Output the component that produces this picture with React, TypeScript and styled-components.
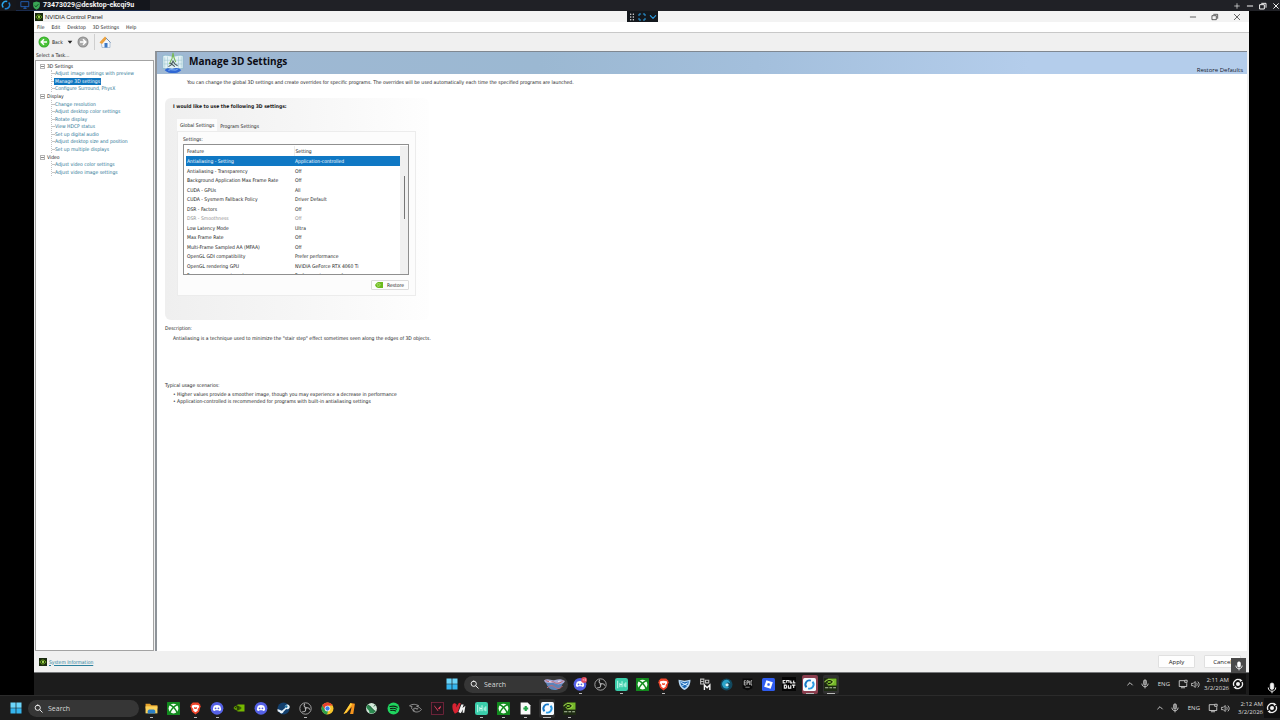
import React from "react";
import styled, { createGlobalStyle, css } from "styled-components";

const GlobalStyle = createGlobalStyle`
  *, *::before, *::after { box-sizing: border-box; }
  body { margin: 0; background: #000; }
  button, input { font: inherit; color: inherit; }
  ul { list-style: none; margin: 0; padding: 0; }
  p, h1, h2 { margin: 0; }
  svg { display: block; flex: none; }
`;

const ui = `"DejaVu Sans Condensed", "Liberation Sans", sans-serif`;
const shell = `"Open Sans", "Noto Sans", sans-serif`;

/* ---------- page ---------- */

const Page = styled.div`
  display: flex;
  flex-direction: column;
  min-height: 100vh;
  background: #000;
  color: #1a1a1a;
  font-family: ${ui};
  font-size: 5px;
  line-height: 8px;
`;

const SessionBar = styled.header`
  display: flex;
  align-items: center;
  height: 11px;
  background: #202126;
  color: #f4f4f4;
`;

const SessionHome = styled.div`
  width: 16px;
  height: 11px;
  padding-left: 1px;
  background: #16171b;
`;

const SessionTab = styled.div`
  display: flex;
  align-items: center;
  gap: 2px;
  width: 134px;
  height: 11px;
  padding-left: 4px;
  background: #14161c;
  border-bottom: 1px solid #1b2b4c;
  font-family: Roboto, sans-serif;
  font-size: 7px;
  font-weight: 700;
  white-space: nowrap;
`;

const SessionActions = styled.div`
  display: flex;
  gap: 5px;
  margin-left: auto;
`;

const BareButton = styled.button`
  display: flex;
  align-items: center;
  justify-content: center;
  padding: 0;
  border: 0;
  background: none;
`;

const Stage = styled.div`
  display: flex;
  flex: 1;
`;

const Gutter = styled.div<{ $width: number }>`
  display: flex;
  align-items: flex-end;
  justify-content: flex-end;
  width: ${(p) => p.$width}px;
  padding: 0 2px 1px 0;
  color: #f2f2f2;
`;

const Desktop = styled.div`
  position: relative;
  display: flex;
  flex: 1;
  flex-direction: column;
  min-width: 0;
`;

const FloatingBar = styled.div`
  position: absolute;
  top: 0;
  left: 593px;
  display: flex;
  align-items: center;
  justify-content: space-around;
  width: 31px;
  height: 11px;
  background: #14181d;
`;

const MicBadge = styled.div`
  position: absolute;
  right: 3px;
  bottom: 22px;
  display: flex;
  align-items: center;
  justify-content: center;
  width: 15px;
  height: 15px;
  background: #4a4a4a;
  color: #fff;
`;

/* ---------- control panel window ---------- */

const AppWindow = styled.div`
  display: flex;
  flex: 1;
  flex-direction: column;
  background: #f0f0f0;
`;

const TitleBar = styled.div`
  display: flex;
  align-items: center;
  gap: 2px;
  height: 11px;
  padding: 0 8px 0 1px;
  background: #f3f3f3;
  font-family: "Liberation Sans", sans-serif;
  font-size: 6px;
`;

const WindowControls = styled.div`
  display: flex;
  gap: 14px;
  margin-left: auto;
`;

const MenuBar = styled.nav`
  display: flex;
  align-items: center;
  gap: 7px;
  height: 10px;
  padding: 0 3px;
  background: #fff;
`;

const MenuItem = styled(BareButton)``;

const ToolBar = styled.div`
  display: flex;
  align-items: center;
  height: 19px;
  padding-left: 4px;
  border-top: 1px solid #c8c8c8;
`;

const ToolButton = styled(BareButton)`
  gap: 2px;
`;

const ToolDivider = styled.span`
  width: 1px;
  height: 16px;
  margin: 0 4px 0 5px;
  background: #cfcfcf;
`;

const Body = styled.div`
  display: flex;
  flex: 1;
`;

const TaskPane = styled.aside`
  display: flex;
  flex-direction: column;
  width: 121px;
  padding: 0 0 0 1px;
`;

const TaskHeading = styled.h2`
  height: 9px;
  padding-left: 1px;
  font-size: 5px;
  font-weight: 400;
  line-height: 8px;
`;

const TaskBox = styled.div`
  flex: 1;
  margin-right: 1px;
  padding: 1px 0 0 4px;
  border: 1px solid #a3a3a3;
  background: #fff;
`;

const Tree = styled.ul`
  display: flex;
  flex-direction: column;
  height: 114px;
`;

const Group = styled.li<{ $rows: number }>`
  display: flex;
  flex: ${(p) => p.$rows} 0 0;
  flex-direction: column;
`;

const GroupName = styled.div`
  display: flex;
  flex: 1 0 0;
  align-items: center;
  gap: 2px;
`;

const Expander = styled.button`
  width: 5px;
  height: 5px;
  padding: 0;
  border: 1px solid #b4b4b4;
  background: linear-gradient(#888, #888) center / 3px 1px no-repeat #fff;
`;

const Leaves = styled.ul<{ $rows: number }>`
  display: flex;
  flex: ${(p) => p.$rows} 0 0;
  flex-direction: column;
  margin-left: 11px;
  border-left: 1px dotted #c4c4c4;
`;

const Leaf = styled.li`
  display: flex;
  flex: 1 0 0;
  align-items: center;

  &::before {
    content: "";
    width: 2px;
    border-top: 1px dotted #c4c4c4;
  }
`;

const TaskLink = styled.a<{ $active?: boolean }>`
  padding: 0 1px;
  color: #2b7594;
  line-height: 7px;
  text-decoration: none;
  white-space: nowrap;
  ${(p) =>
    p.$active &&
    css`
      background: #0f76c0;
      color: #fff;
    `}
`;

const Content = styled.main`
  display: flex;
  flex: 1;
  flex-direction: column;
  min-width: 0;
  margin-right: 2px;
  border-left: 2px solid #8e9399;
  border-top: 1px solid #7f8790;
  background: #fff;
`;

const Banner = styled.div`
  display: flex;
  gap: 5px;
  height: 22px;
  padding: 0 4px 0 5px;
  background: linear-gradient(90deg, #9fb8d3, #9bb8d2 35%, #a3bfdc 55%, #b4cdeb 80%);
`;

const PageTitle = styled.h1`
  color: #0c0c14;
  font-family: "Open Sans", sans-serif;
  font-size: 10px;
  font-weight: 700;
  line-height: 18px;
`;

const RestoreDefaults = styled(BareButton)`
  align-self: flex-end;
  margin-left: auto;
  color: #17202c;
  font-family: ${shell};
  font-size: 6px;
`;

const Intro = styled.p`
  padding: 4px 0 0 30px;
`;

const Card = styled.section`
  width: 264px;
  height: 222px;
  margin: 12px 0 4px 8px;
  padding: 4px 12px 0;
  border-radius: 6px;
  background: linear-gradient(90deg, #efefef, #f6f6f6 50%, #fefefe);
`;

const CardTitle = styled.h2`
  height: 17px;
  margin-left: -4px;
  font-size: 5px;
  font-weight: 700;
  line-height: 8px;
`;

const Tabs = styled.div`
  display: flex;
  align-items: flex-end;
`;

const Tab = styled.button<{ $active?: boolean }>`
  height: ${(p) => (p.$active ? 12 : 10)}px;
  padding: 0 3px;
  border: 0;
  background: ${(p) => (p.$active ? "#fcfcfc" : "transparent")};
  line-height: 8px;
`;

const TabPanel = styled.div`
  width: 239px;
  height: 165px;
  padding: 3px 6px 0 5px;
  border: 1px solid #ececec;
  background: #fcfcfc;
`;

const ListBox = styled.div`
  display: flex;
  height: 131px;
  margin-top: 1px;
  padding: 1px 0 0 2px;
  overflow: hidden;
  border: 1px solid #8f8f8f;
  background: #fff;
`;

const SettingsTable = styled.table`
  flex: 1;
  align-self: flex-start;
  border-collapse: collapse;
  table-layout: fixed;
`;

const Cell = css`
  padding: 0 0 0 1px;
  font-weight: 400;
  text-align: left;
  white-space: nowrap;
  line-height: 8px;
`;

const HeadCell = styled.th`
  ${Cell}
  height: 10px;

  & + & {
    width: 106px;
    border-left: 1px solid #ececec;
  }
`;

const BodyCell = styled.td`
  ${Cell}
`;

const Row = styled.tr<{ $state?: "selected" | "disabled" }>`
  height: 10px;
  &:nth-child(even) { height: 9px; }
  ${(p) => p.$state === "selected" && css`background: #0f78c4; color: #fff;`}
  ${(p) => p.$state === "disabled" && css`color: #8e8e8e;`}
`;

const ScrollTrack = styled.div`
  width: 8px;
  padding: 30px 0 0 4px;
  background: #f0f0f0;
`;

const ScrollThumb = styled.div`
  width: 1px;
  height: 43px;
  background: #767676;
`;

const PanelFooter = styled.div`
  display: flex;
  justify-content: flex-end;
  padding-top: 5px;
`;

const RestoreButton = styled.button`
  display: flex;
  align-items: center;
  gap: 4px;
  width: 38px;
  height: 10px;
  padding: 0 3px;
  border: 1px solid #dcdcdc;
  border-radius: 1px;
  background: #fdfdfd;
`;

const Notes = styled.section`
  min-height: 57px;
  padding-left: 8px;
`;

const NotesTitle = styled.h2`
  padding-bottom: 2px;
  font-size: 5px;
  font-weight: 400;
  line-height: 8px;
`;

const NotesText = styled.p`
  padding-left: 8px;
`;

const Bullets = styled.ul`
  padding-left: 8px;
  line-height: 7px;

  li::before {
    content: "• ";
  }
`;

const BottomBar = styled.footer`
  display: flex;
  align-items: center;
  gap: 9px;
  height: 21px;
  padding: 0 8px 0 5px;
`;

const SystemInfo = styled.a`
  display: flex;
  align-items: center;
  gap: 2px;
  margin-right: auto;
  color: #2b7f9c;
`;

const DialogButton = styled.button`
  width: 37px;
  height: 13px;
  padding: 0;
  border: 1px solid #e0e0e0;
  border-radius: 1px;
  background: #fefefe;
  font-family: ${shell};
  font-size: 6px;
`;

/* ---------- taskbars ---------- */

const TaskBar = styled.div<{ $height: number; $centered?: boolean }>`
  display: flex;
  align-items: center;
  justify-content: ${(p) => (p.$centered ? "center" : "flex-start")};
  position: relative;
  height: ${(p) => p.$height}px;
  padding-left: ${(p) => (p.$centered ? 2 : 10)}px;
  border-top: 1px solid ${(p) => (p.$centered ? "#77797b" : "#2b2b2b")};
  background: #1c1c1c;
  color: #eee;
  font-family: ${shell};
  font-size: 6px;
`;

const SearchPill = styled.label<{ $width: number }>`
  display: flex;
  align-items: center;
  gap: 5px;
  width: ${(p) => p.$width}px;
  height: 17px;
  margin-left: 6px;
  padding: 0 2px 0 6px;
  border-radius: 9px;
  background: #363636;
  font-size: 7px;
`;

const SearchInput = styled.input`
  flex: 1;
  min-width: 0;
  height: 11px;
  padding: 0;
  border: 0;
  background: none;
  outline: none;

  &::placeholder {
    color: #d8d8d8;
    opacity: 1;
  }
`;

const Apps = styled.div<{ $width?: number }>`
  display: flex;
  justify-content: space-between;
  gap: ${(p) => (p.$width ? 0 : 6)}px;
  width: ${(p) => (p.$width ? `${p.$width}px` : "auto")};
  margin-left: 4px;
`;

const AppButton = styled.button<{ $mark?: "running" | "active"; $tint?: string }>`
  position: relative;
  display: flex;
  align-items: center;
  justify-content: center;
  width: 16px;
  height: 19px;
  padding: 0;
  border: 0;
  border-radius: 2px;
  background: ${(p) => p.$tint || "none"};

  ${(p) =>
    p.$mark &&
    css`
      &::after {
        content: "";
        position: absolute;
        bottom: 0;
        width: ${p.$mark === "active" ? 8 : 3}px;
        height: 1px;
        background: #b8b8b8;
      }
    `}
`;

const Tray = styled.div<{ $end: number }>`
  position: absolute;
  right: ${(p) => p.$end}px;
  display: flex;
  align-items: center;
  color: #ddd;
`;

const TrayIcons = styled.div<{ $gap: number }>`
  display: flex;
  align-items: center;
  gap: 3px;
  margin-right: ${(p) => p.$gap}px;
`;

const Lang = styled.span`
  margin: 0 5px;
`;

const Clock = styled.time`
  width: 26px;
  line-height: 8px;
  text-align: right;
  white-space: nowrap;
`;

const TrayEnd = styled.div`
  display: flex;
  align-items: center;
  justify-content: center;
  width: 16px;
  height: 20px;
  margin-left: 1px;
  background: #0f0f0f;
`;

/* ---------- icons ---------- */

type IconProps = { size?: number; children?: React.ReactNode };
const Svg = ({ size = 13, children }: IconProps) => (
  <svg width={size} height={size} viewBox="0 0 24 24" fill="none" aria-hidden="true">
    {children}
  </svg>
);

const Line = ({ d, w = 2, size = 8, color = "currentColor" }: { d: string; w?: number; size?: number; color?: string }) => (
  <Svg size={size}>
    <path d={d} stroke={color} strokeWidth={w} strokeLinecap="round" strokeLinejoin="round" />
  </Svg>
);

const MicIcon = ({ size = 10, filled = false }: { size?: number; filled?: boolean }) => (
  <Svg size={size}>
    <rect x="8.5" y="2" width="7" height="13" rx="3.5" fill={filled ? "currentColor" : "#888"} stroke="currentColor" strokeWidth="1.4" />
    <path d="M4.500 11c0 10 15 10 15 0M12 18.500v4" stroke="currentColor" strokeWidth="2" />
  </Svg>
);

const Windows = () => (
  <Svg size={12}>
    <path d="M1 1h10.300v10.300H1zM12.700 1H23v10.300H12.700z" fill="#6cd5fa" />
    <path d="M1 12.700h10.300V23H1zM12.700 12.700H23V23H12.700z" fill="#35b5ee" />
  </Svg>
);

const Magnifier = () => <Line size={9} w={2.6} d="M10 3a7 7 0 1 0 0 14a7 7 0 0 0 0-14zM15.500 15.500L22 22" />;

const Swirl = () => (
  <Svg>
    <rect width="24" height="24" rx="3" fill="#f6fbff" />
    <path d="M6.500 17A7.400 7.400 0 0 1 14.500 5" stroke="#1678c8" strokeWidth="3.600" />
    <path d="M17.500 7A7.400 7.400 0 0 1 9.500 19" stroke="#2a9be6" strokeWidth="3.600" />
  </Svg>
);

const SessionLogo = () => (
  <Svg size={10}>
    <path d="M5.500 18A9 9 0 0 1 15 3.500" stroke="#2aa4ea" strokeWidth="3.600" />
    <path d="M18.500 6A9 9 0 0 1 9 20.500" stroke="#1f7fd0" strokeWidth="3.600" />
  </Svg>
);

const Monitor = () => <Line size={10} w={2} color="#2467c4" d="M3 4h18v12H3zM9 20h6M12 16v4" />;

const Shield = () => (
  <Svg size={9}>
    <path d="M12 1l9 3v8c0 6-5 9-9 11-4-2-9-5-9-11V4z" fill="#3aa655" />
    <path d="M7.500 12l3 3.500L17 8.500" stroke="#0e3319" strokeWidth="2.200" />
  </Svg>
);

const Folder = () => (
  <Svg>
    <path d="M1 3h8l3 3h11v6H1z" fill="#e6a32c" />
    <path d="M1 8h22v13H1z" fill="#fbd35c" />
    <path d="M5 21v-4c0-2 2-3 4-3h6c2 0 4 1 4 3v4z" fill="#2c7fc5" />
  </Svg>
);

const Xbox = () => (
  <Svg>
    <rect width="24" height="24" rx="1" fill="#128a1e" />
    <circle cx="12" cy="12" r="9" fill="#f4fff4" />
    <path d="M5 5C9 7 16 13 18.500 20M19 5C15 7 8 13 5.500 20" stroke="#128a1e" strokeWidth="2.600" />
  </Svg>
);

const Brave = () => (
  <Svg>
    <path d="M7 1h10l3 3 1.500 4-3 10L12 23l-6.500-5-3-10L4 4z" fill="#f0452a" />
    <path d="M6 6l6-1 6 1 1 3-3 4 0 3-4 3-4-3 0-3-3-4z" fill="#fff" />
    <path d="M9 9l3 1 3-1-1 4h-4z" fill="#f0452a" />
  </Svg>
);

const Discord = ({ badge = false }: { badge?: boolean }) => (
  <Svg size={14}>
    <circle cx="12" cy="12.500" r="11" fill="#5561e6" />
    <path d="M7 8c3-1.600 7-1.600 10 0 1.500 2.500 2.200 5 2 8-1.500 1-2.500 1.300-3.500 1.300L14.500 16h-5l-1 1.300C7.500 17.300 6.500 17 5 16c-.2-3 .5-5.500 2-8z" fill="#fff" />
    <circle cx="9.500" cy="12.500" r="1.500" fill="#5561e6" />
    <circle cx="14.500" cy="12.500" r="1.500" fill="#5561e6" />
    {badge && <circle cx="19" cy="5" r="5" fill="#e2495c" />}
    {badge && <path d="M16.500 5h2.500M20 3.500h2M21 4.500v2.500" stroke="#fff" strokeWidth="1.200" />}
  </Svg>
);

const NvidiaEye = () => (
  <Svg size={12}>
    <path d="M9 5h14v14H9z" fill="#76b900" />
    <path d="M1 12c3-5 8-6 12-4 3 1 4 3 5 4-3 5-7 6-10 5-4-1-6-3-7-5z" fill="#5c9400" />
    <path d="M4 12c2-3 6-4 9-2l2 2c-2 3-5 4-7 3" stroke="#1d2b06" strokeWidth="1.800" />
    <circle cx="10" cy="12" r="2" fill="#1d2b06" />
  </Svg>
);

const Steam = () => (
  <Svg>
    <circle cx="12" cy="12" r="11" fill="#123f6d" />
    <path d="M1 13l8 3 6-5a4.500 4.500 0 1 1 2 2l-5 5c-1 4-6 4-7 1l-4-2z" fill="#e8f3fa" />
    <circle cx="17" cy="8.500" r="2.500" fill="#2174a5" />
  </Svg>
);

const Obs = () => (
  <Svg>
    <circle cx="12" cy="12" r="10.500" fill="#191919" stroke="#b5b5b5" strokeWidth="1.600" />
    <path d="M11 3c-4 4 0 8 3 7M20 14c-2-5-8-4-8 0M6 18c6 1 8-4 5-7" stroke="#b5b5b5" strokeWidth="2" />
  </Svg>
);

const Chrome = () => (
  <Svg>
    <circle cx="12" cy="12" r="11" fill="#f7c52b" />
    <path d="M2.500 6.500A11 11 0 0 1 21.500 6.500H12L7.300 14.700z" fill="#e5402f" />
    <path d="M2.500 6.500L8 15l5 2.500L11 23A11 11 0 0 1 2.500 6.500z" fill="#2da14c" />
    <circle cx="12" cy="12" r="5.200" fill="#fff" />
    <circle cx="12" cy="12" r="4" fill="#3b7de8" />
  </Svg>
);

const Strike = () => (
  <Svg>
    <path d="M1 22L14 2l8 1-3 19h-6l3-13L7 20z" fill="#f7951e" />
    <path d="M1 22L14 2l3 2L6 20z" fill="#ffd23b" />
  </Svg>
);

const GreenGlobe = () => (
  <Svg>
    <circle cx="12" cy="12" r="10" fill="#d3e8da" />
    <path d="M3 7c5-4 8 2 12 6 2 3 5 3 5 4-4 5-9 5-12 3 1-4-3-6-5-9z" fill="#2c8a50" />
    <path d="M3 3l16 15" stroke="#2f5f42" strokeWidth="1.600" />
    <path d="M16 8l4-3" stroke="#2f5f42" strokeWidth="1.600" />
  </Svg>
);

const Spotify = () => (
  <Svg>
    <circle cx="12" cy="12" r="11" fill="#20d45f" />
    <path d="M5.500 8.500c5-1.500 9.500-1 13.500 1M6.500 12.200c4-1 8-.7 11 1M7 15.800c3-.8 6.500-.5 9 .8" stroke="#0d1f13" strokeWidth="2" strokeLinecap="round" />
  </Svg>
);

const Shark = () => (
  <Svg>
    <path d="M1 7c6-4 12-3 17 0l-4 1c4 1 7 3 9 6-4 5-11 6-16 2l3-1C5 14 3 11 6 9z" stroke="#a9a9a9" strokeWidth="1.500" />
    <path d="M8 12h9M11 10l5 5" stroke="#8a8a8a" strokeWidth="1.500" />
  </Svg>
);

const Valorant = () => (
  <Svg>
    <rect x="1" y="1" width="22" height="22" fill="#22161c" stroke="#8c2944" strokeWidth="1.300" />
    <path d="M6 8l6 8h2L6 6zM18 7v3l-3 4-2-2z" fill="#ec4460" />
  </Svg>
);

const Medal = () => (
  <Svg size={14}>
    <path d="M1 6c3-4 5-2 7 0l-1 5 5-8 3 1-5 15-5 3C1 17 0 11 1 6z" fill="#d92332" />
    <path d="M11 19l5-13 4 0-2 6 5-4-2 12h-3l1-6-4 7z" fill="#f2f2f2" />
  </Svg>
);

const Hydra = () => (
  <Svg>
    <rect width="24" height="24" rx="4" fill="#3acdaa" />
    <path d="M5 5v14M9 9v8M9 12h4M13 6v11M17 10v6M20 8v9" stroke="#d8fff4" strokeWidth="1.700" />
  </Svg>
);

const Doc = () => (
  <Svg>
    <path d="M3 1h13l5 5v17H3z" fill="#fafafa" />
    <path d="M8 12h9M12.500 7.500v9" stroke="#27a64b" strokeWidth="4" />
  </Svg>
);

const NvPanel = () => (
  <Svg>
    <rect width="24" height="24" fill="#1d2a12" />
    <path d="M7 1h16v13H7z" fill="#76b82a" />
    <path d="M1 8c4-7 12-7 17-1-3 7-11 6-13 2" stroke="#9ad04c" strokeWidth="2" />
    <path d="M7 5c4-1 6 0 8 2-2 3-5 4-8 3" stroke="#172208" strokeWidth="2" />
    <path d="M2 18h6M10 18h5M17 18h5" stroke="#b7c7a7" strokeWidth="2" />
  </Svg>
);

const BlueShield = () => (
  <Svg>
    <path d="M1 3l11 2 11-2c0 9-3 15-11 19C4 18 1 12 1 3z" fill="#b7d7f2" />
    <path d="M4 6l8 2 8-2c-1 7-3 10-8 13-5-3-7-6-8-13z" fill="#1b68b5" />
    <path d="M5 8l13 6M8 14l10-5" stroke="#d6ecff" strokeWidth="1.800" />
  </Svg>
);

const Bcm = () => (
  <Svg>
    <path d="M3 2h6v9H3zM12 4h6v5h-6z" stroke="#bdbdbd" strokeWidth="2" />
    <path d="M10 22v-9l5 5 5-5v9" stroke="#f4f4f4" strokeWidth="2.600" />
    <path d="M3 6.500h6" stroke="#bdbdbd" strokeWidth="2" />
  </Svg>
);

const BlueOrb = () => (
  <Svg>
    <circle cx="12" cy="12" r="11" fill="#12485e" />
    <path d="M12 3C6 3 3 9 4 13c2 8 11 8 13 3-5 1-8-2-6-6 2-3 6-2 8 0-1-4-3-7-7-7z" fill="#2ba3c9" />
    <circle cx="13" cy="12.500" r="3" fill="#d4f3fb" />
  </Svg>
);

const Epic = () => (
  <Svg>
    <path d="M3 1h18v18l-9 4-9-4z" fill="#090909" />
    <path d="M9 5H6v8h3M6 9h3M11 13V5h2.500v4H11M16 5v8M20.500 5H18.500v8h2" stroke="#e2e2e2" strokeWidth="1.400" />
    <path d="M8 17h8" stroke="#aaa" strokeWidth="1.500" />
  </Svg>
);

const Roblox = () => (
  <Svg>
    <rect width="24" height="24" rx="3" fill="#2f5cf0" />
    <path fillRule="evenodd" d="M8 4l12 4-4 12-12-4zM10.800 9.400l-1.400 4 4 1.400 1.400-4z" fill="#fff" />
  </Svg>
);

const CallOfDuty = () => (
  <Svg size={14}>
    <rect width="24" height="24" fill="#050505" />
    <path d="M6 6H2v4h4M8 10V6h4v4M15 6v4h3M20 6v4h3M4 14v5h3l1-2-1-3zM11 14v5h4v-5M17 14h6M20 14v5" stroke="#eee" strokeWidth="2" />
  </Svg>
);

const Gator = () => (
  <svg width="23" height="13" viewBox="0 0 46 26" fill="none" aria-hidden="true">
    <path d="M2 5c10-6 14 2 22-1s14-2 20 2c-3 8-12 9-20 7C14 11 5 13 2 5z" fill="#a7a9d8" />
    <path d="M6 9c7 3 12-1 18 2s12 2 16-1c-3 9-8 14-17 14S8 18 6 9z" fill="#5c83b8" />
    <path d="M5 4c6 6 13 1 18 5s12 1 18-4M8 20c8-8 13-4 17-1s9 3 14-3" stroke="#c9686f" strokeWidth="2" />
    <path d="M12 7l5 1M30 7l5-1" stroke="#f1e3ee" strokeWidth="2.500" />
  </svg>
);

const RecordEye = () => (
  <Svg size={12}>
    <path d="M4 16A9 9 0 0 1 17 4.500M20 8A9 9 0 0 1 7 19.500" stroke="#f2f2f2" strokeWidth="2.600" />
    <path d="M15 1l6 4-5 3zM9 23l-6-4 5-3z" fill="#f2f2f2" />
    <circle cx="12" cy="12" r="4" fill="#f2f2f2" />
  </Svg>
);

const NetIcon = () => <Line size={10} w={2} d="M15 4H3v14h18v-7M8 21h8M17 3h5v5h-5z" />;
const SpeakerIcon = () => <Line size={9} w={2} d="M2 9h4l5-5v16l-5-5H2zM15 8c2 2 2 6 0 8M19 5c4 4 4 10 0 14" />;

const PanelBadge = () => (
  <Svg size={8}>
    <rect width="24" height="24" fill="#1a2a10" />
    <path d="M3 12c4-8 12-8 18 0-6 8-14 8-18 0z" stroke="#7ec21c" strokeWidth="2.500" />
    <circle cx="12" cy="12" r="3.500" fill="#a8dd55" />
  </Svg>
);

const Arrow = ({ back = false }: { back?: boolean }) => (
  <Svg size={12}>
    <circle cx="12" cy="12" r="11" fill={back ? "#35ad28" : "#8b8b8b"} />
    <circle cx="12" cy="12" r="9" fill={back ? "#4cc33a" : "#a9a9a9"} />
    <path d={back ? "M18 12H7M12 6.500L6.500 12l5.500 5.500" : "M6 12h11M12 6.500l5.500 5.500-5.500 5.500"} stroke="#fff" strokeWidth="3" />
  </Svg>
);

const Home = () => (
  <Svg size={12}>
    <path d="M4 11L13 3l9 9v11H6z" fill="#f2f6fb" stroke="#8ea7c6" strokeWidth="1.200" />
    <path d="M1 13L12 1l4 4L6 16z" fill="#eda23e" />
    <path d="M14 4l9 9" stroke="#6f8fb5" strokeWidth="2" />
    <path d="M11 14h6v9h-6z" fill="#3d78c4" />
  </Svg>
);

const SceneIcon = () => (
  <Svg size={22}>
    <path d="M1 4c4-1 7 0 11 1 4-1 7-2 11-1v14c-4 0-7 0-11 1-4-1-7-1-11-1z" fill="#e4f2f5" stroke="#7fb3c6" strokeWidth=".7" />
    <path d="M3 6v11M6 5v12M18 5v12M21 5v12M2 9h20M2 13h20" stroke="#9cc7d1" strokeWidth=".6" />
    <path d="M12 1l1 5 2 5M12 1l-1 6-3 6" stroke="#79b857" strokeWidth="1.200" />
    <path d="M7 16l3-2 2-4 2 3 3 2M9 12l5 4" stroke="#4b5c60" strokeWidth="1.200" />
    <path d="M3 20c3-4 6-1 9-2s7-1 9 2c-3 3-6 3-9 3s-6 0-9-3z" fill="#2f67d4" />
    <path d="M7 20c3-2 7 1 10-1" stroke="#8fc1f5" strokeWidth="1" />
  </Svg>
);

/* ---------- data ---------- */

const tasks = [
  { name: "3D Settings", items: ["Adjust image settings with preview", "Manage 3D settings", "Configure Surround, PhysX"] },
  {
    name: "Display",
    items: [
      "Change resolution",
      "Adjust desktop color settings",
      "Rotate display",
      "View HDCP status",
      "Set up digital audio",
      "Adjust desktop size and position",
      "Set up multiple displays",
    ],
  },
  { name: "Video", items: ["Adjust video color settings", "Adjust video image settings"] },
];

const settings: [string, string, ("selected" | "disabled")?][] = [
  ["Antialiasing - Setting", "Application-controlled", "selected"],
  ["Antialiasing - Transparency", "Off"],
  ["Background Application Max Frame Rate", "Off"],
  ["CUDA - GPUs", "All"],
  ["CUDA - Sysmem Fallback Policy", "Driver Default"],
  ["DSR - Factors", "Off"],
  ["DSR - Smoothness", "Off", "disabled"],
  ["Low Latency Mode", "Ultra"],
  ["Max Frame Rate", "Off"],
  ["Multi-Frame Sampled AA (MFAA)", "Off"],
  ["OpenGL GDI compatibility", "Prefer performance"],
  ["OpenGL rendering GPU", "NVIDIA GeForce RTX 4060 Ti"],
  ["Power management mode", "Prefer maximum performance"],
];

type AppEntry = { name: string; icon: React.ReactNode; mark?: "running" | "active"; tint?: string };

const remoteApps: AppEntry[] = [
  { name: "Discord", icon: <Discord badge />, mark: "running" },
  { name: "OBS Studio", icon: <Obs /> },
  { name: "Audio", icon: <Hydra />, mark: "running" },
  { name: "Xbox", icon: <Xbox /> },
  { name: "Brave", icon: <Brave />, mark: "running" },
  { name: "Security", icon: <BlueShield /> },
  { name: "Modern", icon: <Bcm /> },
  { name: "Orb", icon: <BlueOrb /> },
  { name: "Epic Games", icon: <Epic /> },
  { name: "Roblox", icon: <Roblox /> },
  { name: "Call of Duty", icon: <CallOfDuty /> },
  { name: "Remote desk", icon: <Swirl />, mark: "active", tint: "#8a3e4e" },
  { name: "NVIDIA Control Panel", icon: <NvPanel />, mark: "active", tint: "#303030" },
];

const hostApps: AppEntry[] = [
  { name: "File Explorer", icon: <Folder />, mark: "running" },
  { name: "Xbox", icon: <Xbox /> },
  { name: "Brave", icon: <Brave />, mark: "running" },
  { name: "Discord", icon: <Discord />, mark: "running" },
  { name: "NVIDIA", icon: <NvidiaEye /> },
  { name: "Discord PTB", icon: <Discord /> },
  { name: "Steam", icon: <Steam /> },
  { name: "OBS Studio", icon: <Obs />, mark: "running" },
  { name: "Chrome", icon: <Chrome /> },
  { name: "Aim trainer", icon: <Strike /> },
  { name: "Globe", icon: <GreenGlobe /> },
  { name: "Spotify", icon: <Spotify /> },
  { name: "Shark", icon: <Shark /> },
  { name: "Valorant", icon: <Valorant /> },
  { name: "Clips", icon: <Medal /> },
  { name: "Audio", icon: <Hydra />, mark: "running" },
  { name: "Xbox app", icon: <Xbox />, mark: "running" },
  { name: "Document", icon: <Doc />, mark: "running" },
  { name: "Remote desk", icon: <Swirl />, mark: "active", tint: "#2c2c2c" },
  { name: "NVIDIA Control Panel", icon: <NvPanel />, mark: "running" },
];

const AppStrip = ({ apps, width }: { apps: AppEntry[]; width?: number }) => (
  <Apps $width={width}>
    {apps.map((a) => (
      <AppButton key={a.name} aria-label={a.name} $mark={a.mark} $tint={a.tint}>
        {a.icon}
      </AppButton>
    ))}
  </Apps>
);

const Search = ({ id, width, art }: { id: string; width: number; art?: boolean }) => (
  <SearchPill htmlFor={id} $width={width}>
    <Magnifier />
    <SearchInput id={id} placeholder="Search" aria-label="Search" />
    {art && <Gator />}
  </SearchPill>
);

const SystemTray = ({ time, end, gap }: { time: string; end: number; gap: number }) => (
  <Tray $end={end}>
    <TrayIcons $gap={gap}>
      <Line size={8} w={2.6} d="M5 15l7-7 7 7" />
      <span />
      <MicIcon size={10} />
      <Lang>ENG</Lang>
      <NetIcon />
      <SpeakerIcon />
    </TrayIcons>
    <Clock>
      {time}
      <br />
      3/2/2026
    </Clock>
    <TrayEnd>
      <RecordEye />
    </TrayEnd>
  </Tray>
);

export default function App() {
  return (
    <Page>
      <GlobalStyle />
      <SessionBar>
        <SessionHome>
          <SessionLogo />
        </SessionHome>
        <SessionTab>
          <Monitor />
          <Shield />
          <span>73473029@desktop-ekcqi9u</span>
        </SessionTab>
        <SessionActions>
          <BareButton aria-label="New tab"><Line d="M12 5v14M5 12h14" /></BareButton>
          <BareButton aria-label="Minimize"><Line w={3} d="M4 12h16" /></BareButton>
          <BareButton aria-label="Restore"><Line w={3} d="M3 8h13v13H3zM8 4h13v12" /></BareButton>
          <BareButton aria-label="Close"><Line w={3} d="M5 5l14 14M19 5L5 19" /></BareButton>
        </SessionActions>
      </SessionBar>

      <Stage>
        <Gutter $width={34} />
        <Desktop>
          <AppWindow>
            <TitleBar>
              <PanelBadge />
              <span>NVIDIA Control Panel</span>
              <WindowControls>
                <BareButton aria-label="Minimize window"><Line d="M4 12h16" /></BareButton>
                <BareButton aria-label="Restore window"><Line d="M4 8h12v12H4zM8 4h12v12" /></BareButton>
                <BareButton aria-label="Close window"><Line d="M4 4l16 16M20 4L4 20" /></BareButton>
              </WindowControls>
            </TitleBar>
            <MenuBar>
              {["File", "Edit", "Desktop", "3D Settings", "Help"].map((m) => (
                <MenuItem key={m}>{m}</MenuItem>
              ))}
            </MenuBar>
            <ToolBar>
              <ToolButton>
                <Arrow back />
                Back
              </ToolButton>
              <ToolButton aria-label="History">
                <Svg size={14}><path d="M8 10h8l-4 5z" fill="#222" /></Svg>
              </ToolButton>
              <ToolButton aria-label="Forward"><Arrow /></ToolButton>
              <ToolDivider />
              <ToolButton aria-label="Home"><Home /></ToolButton>
            </ToolBar>

            <Body>
              <TaskPane>
                <TaskHeading>Select a Task...</TaskHeading>
                <TaskBox>
                  <Tree>
                    {tasks.map((g) => (
                      <Group key={g.name} $rows={g.items.length + 1}>
                        <GroupName>
                          <Expander aria-label={`Collapse ${g.name}`} />
                          {g.name}
                        </GroupName>
                        <Leaves $rows={g.items.length}>
                          {g.items.map((t) => (
                            <Leaf key={t}>
                              <TaskLink href="#" $active={t === "Manage 3D settings"}>{t}</TaskLink>
                            </Leaf>
                          ))}
                        </Leaves>
                      </Group>
                    ))}
                  </Tree>
                </TaskBox>
              </TaskPane>

              <Content>
                <Banner>
                  <SceneIcon />
                  <PageTitle>Manage 3D Settings</PageTitle>
                  <RestoreDefaults>Restore Defaults</RestoreDefaults>
                </Banner>
                <Intro>
                  You can change the global 3D settings and create overrides for specific programs. The overrides will be used
                  automatically each time the specified programs are launched.
                </Intro>
                <Card>
                  <CardTitle>I would like to use the following 3D settings:</CardTitle>
                  <Tabs role="tablist">
                    <Tab role="tab" aria-selected="true" $active>Global Settings</Tab>
                    <Tab role="tab" aria-selected="false">Program Settings</Tab>
                  </Tabs>
                  <TabPanel role="tabpanel">
                    <div>Settings:</div>
                    <ListBox>
                      <SettingsTable>
                        <thead>
                          <tr>
                            <HeadCell>Feature</HeadCell>
                            <HeadCell>Setting</HeadCell>
                          </tr>
                        </thead>
                        <tbody>
                          {settings.map(([feature, value, state]) => (
                            <Row key={feature} $state={state}>
                              <BodyCell>{feature}</BodyCell>
                              <BodyCell>{value}</BodyCell>
                            </Row>
                          ))}
                        </tbody>
                      </SettingsTable>
                      <ScrollTrack>
                        <ScrollThumb />
                      </ScrollTrack>
                    </ListBox>
                    <PanelFooter>
                      <RestoreButton>
                        <svg width="8" height="6" viewBox="0 0 16 12" aria-hidden="true">
                          <path d="M0 6c3-5 6-6 8-6h8v12H6C3 11 1 9 0 6z" fill="#6cbb1e" />
                          <path d="M3 6c3-4 6-3 8 0-3 3-5 3-7 1" stroke="#c9ec9a" strokeWidth="1.500" fill="none" />
                        </svg>
                        Restore
                      </RestoreButton>
                    </PanelFooter>
                  </TabPanel>
                </Card>
                <Notes>
                  <NotesTitle>Description:</NotesTitle>
                  <NotesText>
                    Antialiasing is a technique used to minimize the "stair step" effect sometimes seen along the edges of 3D
                    objects.
                  </NotesText>
                </Notes>
                <Notes>
                  <NotesTitle>Typical usage scenarios:</NotesTitle>
                  <Bullets>
                    <li>Higher values provide a smoother image, though you may experience a decrease in performance</li>
                    <li>Application-controlled is recommended for programs with built-in antialiasing settings</li>
                  </Bullets>
                </Notes>
              </Content>
            </Body>

            <BottomBar>
              <SystemInfo href="#">
                <PanelBadge />
                System Information
              </SystemInfo>
              <DialogButton>Apply</DialogButton>
              <DialogButton>Cancel</DialogButton>
            </BottomBar>
          </AppWindow>

          <TaskBar $height={23} $centered>
            <Windows />
            <Search id="remote-search" width={104} art />
            <AppStrip apps={remoteApps} width={267} />
            <SystemTray time="2:11 AM" end={3} gap={3} />
          </TaskBar>

          <FloatingBar>
            <Svg size={8}>
              <path d="M8 4h.1M8 12h.1M8 20h.1M16 4h.1M16 12h.1M16 20h.1" stroke="#ddd" strokeWidth="4.500" strokeLinecap="round" />
            </Svg>
            <Line w={3} color="#2b9be0" d="M3 8V3h5M16 3h5v5M21 16v5h-5M8 21H3v-5" />
            <Line w={3.4} color="#2b9be0" d="M4 8l8 8 8-8" />
          </FloatingBar>
          <MicBadge>
            <MicIcon filled />
          </MicBadge>
        </Desktop>
        <Gutter $width={31}>
          <MicIcon size={12} filled />
        </Gutter>
      </Stage>

      <TaskBar $height={25}>
        <Windows />
        <Search id="host-search" width={111} />
        <AppStrip apps={hostApps} />
        <SystemTray time="2:12 AM" end={0} gap={7} />
      </TaskBar>
    </Page>
  );
}
